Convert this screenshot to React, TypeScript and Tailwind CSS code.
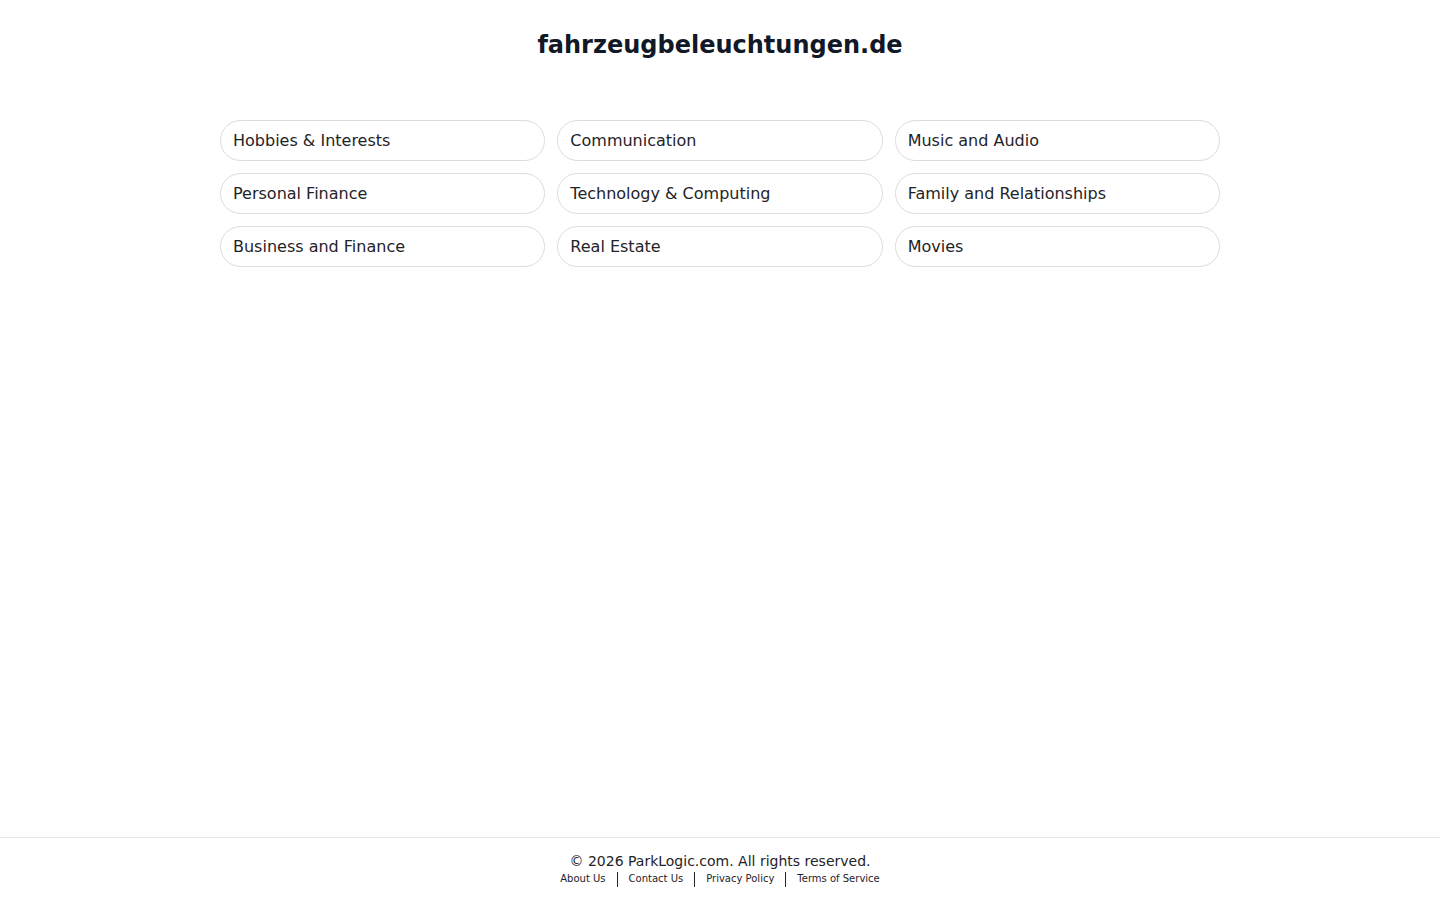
const CATEGORIES = [
  "Hobbies & Interests",
  "Communication",
  "Music and Audio",
  "Personal Finance",
  "Technology & Computing",
  "Family and Relationships",
  "Business and Finance",
  "Real Estate",
  "Movies",
];

const LINKS = ["About Us", "Contact Us", "Privacy Policy", "Terms of Service"];

export default function App() {
  return (
    <div
      className="flex min-h-screen flex-col bg-white text-[#1f2328]"
      style={{ fontFamily: '"DejaVu Sans", Verdana, sans-serif' }}
    >
      <main className="flex-1">
        <h1 className="pt-[29px] text-center text-2xl leading-8 font-bold text-[#111827]">
          fahrzeugbeleuchtungen.de
        </h1>
        <div className="mx-auto mt-[59px] grid w-[1000px] grid-cols-3 gap-3">
          {CATEGORIES.map((c) => (
            <a
              key={c}
              href="#"
              className="flex h-[41px] items-center rounded-full border border-[#dcdcdc] px-[12px] text-base text-[#1f2328]"
            >
              {c}
            </a>
          ))}
        </div>
      </main>
      <footer className="h-[63px] border-t border-[#e5e7eb] pt-[13px] text-center">
        <p className="text-sm leading-5 text-[#1f2328]">
          © 2026 ParkLogic.com. All rights reserved.
        </p>
        <div className="flex items-center justify-center text-[10px] leading-[16px] text-[#1f2328]">
          {LINKS.map((l, i) => (
            <span key={l} className="flex items-center">
              {i > 0 && <span className="mx-[11px] h-[15px] w-px bg-[#1f2328]" />}
              <a href="#">{l}</a>
            </span>
          ))}
        </div>
      </footer>
    </div>
  );
}
